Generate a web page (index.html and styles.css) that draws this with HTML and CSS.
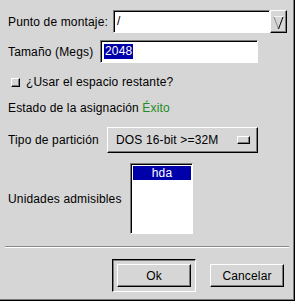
FILE: index.html
```html
<!DOCTYPE html>
<html lang="es">

<head>
    <title>Partición</title>
    <meta charset="UTF-8">
    <link rel="stylesheet" href="styles.css">
</head>

<body>
    <div class="dialog">
        <div class="row mount">
            <span class="label">Punto de montaje:</span>
            <div class="entry mountentry">/</div>
            <div class="arrowbtn">
                <svg width="15" height="21" viewBox="0 0 15 21">
                    <line x1="3" y1="5.5" x2="12" y2="5.5" stroke="#f4f4f4" stroke-width="1" />
                    <line x1="3" y1="6" x2="7.5" y2="18" stroke="#8a8a8a" stroke-width="1" />
                    <line x1="12" y1="6" x2="7.5" y2="18" stroke="#000" stroke-width="1" />
                </svg>
            </div>
        </div>
        <div class="row size">
            <span class="label">Tamaño (Megs)</span>
            <div class="entry sizeentry"><span class="sel">2048</span></div>
        </div>
        <div class="row fill">
            <span class="check"></span>
            <span>¿Usar el espacio restante?</span>
        </div>
        <div class="row status">
            Estado de la asignación&nbsp;<span class="success">Éxito</span>
        </div>
        <div class="row type">
            <span class="label">Tipo de partición</span>
            <div class="optmenu">
                <span>DOS 16-bit &gt;=32M</span>
                <span class="indicator"></span>
            </div>
        </div>
        <div class="row drives">
            <span class="label">Unidades admisibles</span>
            <div class="listbox">
                <div class="item selected">hda</div>
            </div>
        </div>
        <div class="sep"></div>
        <div class="buttons">
            <div class="defaultring">
                <button class="btn" type="button">Ok</button>
            </div>
            <button class="btn" type="button">Cancelar</button>
        </div>
    </div>
</body>

</html>
```

FILE: styles.css
```css
html,
body {
    margin: 0;
    padding: 0;
    background: #d6d6d6;
}

.dialog {
    box-sizing: border-box;
    width: 295px;
    height: 301px;
    padding: 10px 0 0 8px;
    background: #d6d6d6;
    font-family: "Liberation Sans", Arial, sans-serif;
    font-size: 12px;
    letter-spacing: 0.15px;
    color: #000;
    box-shadow: inset -1px -1px 0 #000, inset -2px -2px 0 #7a7a7a;
    overflow: hidden;
}

.row {
    display: flex;
    align-items: center;
}

.label {
    flex: none;
}

/* sunken fields */
.entry,
.listbox {
    box-sizing: border-box;
    background: #fff;
    border: 1px solid;
    border-color: #7a7a7a #fff #fff #7a7a7a;
    box-shadow: inset 1px 1px 0 #000;
}

.entry {
    height: 23px;
    padding: 3px 0 0 3px;
    line-height: 15px;
}

/* raised parts */
.arrowbtn,
.optmenu,
.btn,
.check,
.indicator {
    box-sizing: border-box;
    background: #d6d6d6;
    border: 1px solid;
    border-color: #fff #000 #000 #fff;
    box-shadow: inset -1px -1px 0 #7a7a7a;
}

.mount {
    height: 23px;
}

.mount .label {
    width: 105px;
}

.mountentry {
    width: 157px;
}

.arrowbtn {
    width: 17px;
    height: 23px;
}

.arrowbtn svg {
    display: block;
}

.size {
    height: 23px;
    margin-top: 7px;
}

.size .label {
    width: 92px;
}

.sizeentry {
    width: 158px;
}

.sel {
    display: inline-block;
    background: #0000aa;
    color: #fff;
    padding: 0 1px;
}

.fill {
    height: 16px;
    margin-top: 11px;
    padding-left: 3px;
}

.check {
    width: 9px;
    height: 9px;
    margin-right: 6px;
}

.status {
    height: 16px;
    margin-top: 10px;
}

.success {
    color: #228b22;
}

.type {
    height: 26px;
    margin-top: 11px;
}

.type .label {
    width: 99px;
}

.optmenu {
    display: flex;
    align-items: center;
    justify-content: space-between;
    width: 151px;
    height: 26px;
    padding: 0 7px 0 8px;
}

.indicator {
    width: 13px;
    height: 8px;
}

.drives {
    height: 71px;
    margin-top: 10px;
}

.drives .label {
    width: 122px;
}

.listbox {
    width: 63px;
    height: 71px;
    padding: 2px 1px 0 2px;
}

.item {
    height: 14px;
    line-height: 14px;
    text-align: center;
}

.selected {
    background: #0000aa;
    color: #fff;
}

.sep {
    height: 1px;
    margin: 12px 6px 0 -3px;
    background: #8a8a8a;
    border-bottom: 1px solid #fff;
}

.buttons {
    display: flex;
    align-items: center;
    margin-top: 11px;
    padding-left: 104px;
}

.defaultring {
    box-sizing: border-box;
    width: 84px;
    height: 33px;
    padding: 4px;
    border: 1px solid;
    border-color: #000 #fff #fff #000;
    box-shadow: inset 1px 1px 0 #7a7a7a;
    margin-right: 14px;
}

.btn {
    display: block;
    width: 74px;
    height: 23px;
    padding: 0;
    margin: 0;
    font-family: "Liberation Sans", Arial, sans-serif;
    font-size: 12px;
    letter-spacing: 0.15px;
    color: #000;
}
```
